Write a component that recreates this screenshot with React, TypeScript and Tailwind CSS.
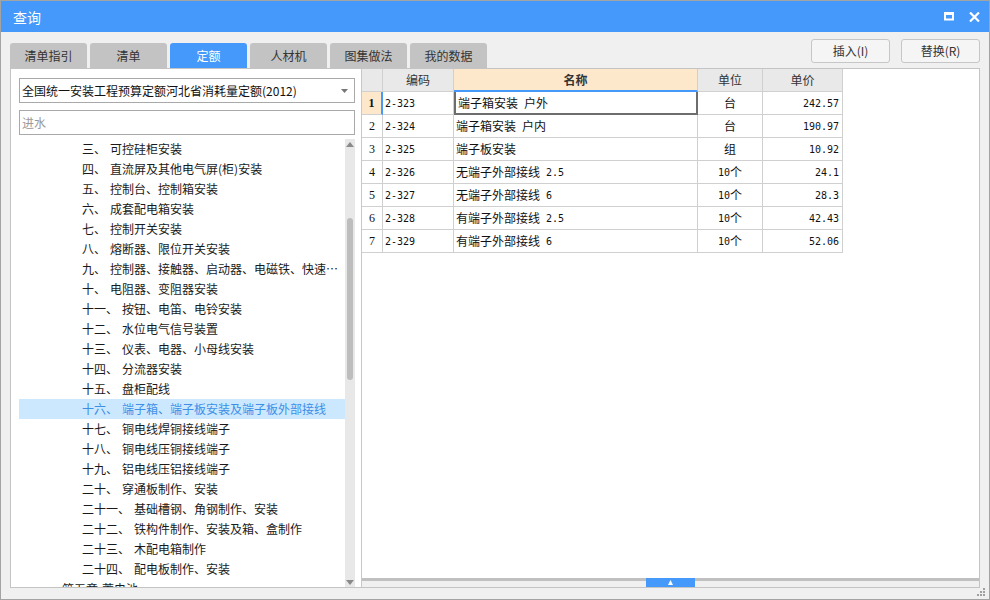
import React from "react";

const tabs = ["清单指引", "清单", "定额", "人材机", "图集做法", "我的数据"];

const tree: { num: string; text: string; level?: number; selected?: boolean }[] = [
  { num: "三、", text: "可控硅柜安装" },
  { num: "四、", text: "直流屏及其他电气屏(柜)安装" },
  { num: "五、", text: "控制台、控制箱安装" },
  { num: "六、", text: "成套配电箱安装" },
  { num: "七、", text: "控制开关安装" },
  { num: "八、", text: "熔断器、限位开关安装" },
  { num: "九、", text: "控制器、接触器、启动器、电磁铁、快速自动开关安装" },
  { num: "十、", text: "电阻器、变阻器安装" },
  { num: "十一、", text: "按钮、电笛、电铃安装" },
  { num: "十二、", text: "水位电气信号装置" },
  { num: "十三、", text: "仪表、电器、小母线安装" },
  { num: "十四、", text: "分流器安装" },
  { num: "十五、", text: "盘柜配线" },
  { num: "十六、", text: "端子箱、端子板安装及端子板外部接线", selected: true },
  { num: "十七、", text: "铜电线焊铜接线端子" },
  { num: "十八、", text: "铜电线压铜接线端子" },
  { num: "十九、", text: "铝电线压铝接线端子" },
  { num: "二十、", text: "穿通板制作、安装" },
  { num: "二十一、", text: "基础槽钢、角钢制作、安装" },
  { num: "二十二、", text: "铁构件制作、安装及箱、盒制作" },
  { num: "二十三、", text: "木配电箱制作" },
  { num: "二十四、", text: "配电板制作、安装" },
  { num: "第五章", text: "蓄电池", level: 0 },
];

const rows = [
  ["2-323", "端子箱安装 户外", "台", "242.57"],
  ["2-324", "端子箱安装 户内", "台", "190.97"],
  ["2-325", "端子板安装", "组", "10.92"],
  ["2-326", "无端子外部接线 2.5", "10个", "24.1"],
  ["2-327", "无端子外部接线 6", "10个", "28.3"],
  ["2-328", "有端子外部接线 2.5", "10个", "42.43"],
  ["2-329", "有端子外部接线 6", "10个", "52.06"],
];

const mono = "font-['DejaVu_Sans_Mono',monospace] text-[10px]";

// ascii runs in the grid use a narrow mono face, like the original's SimSun
function Mixed({ text }: { text: string }) {
  const parts = text.split(/([\x20-\x7e]+)/).filter(Boolean);
  return (
    <>
      {parts.map((p, i) =>
        /^[\x20-\x7e]+$/.test(p) ? (
          <span key={i} className={`${mono} whitespace-pre`}>
            {p}
          </span>
        ) : (
          <span key={i}>{p}</span>
        )
      )}
    </>
  );
}

function Triangle({ up }: { up?: boolean }) {
  return (
    <svg width="8" height="5" viewBox="0 0 8 5">
      <path d={up ? "M0 5 L4 0 L8 5 Z" : "M0 0 L8 0 L4 5 Z"} fill="#8a8a8a" />
    </svg>
  );
}

export default function App() {
  return (
    <div className="w-[990px] h-[600px] flex flex-col bg-[#f0f0f0] border border-[#a3a3a3] overflow-hidden text-[12px] text-[#222] font-['Microsoft_YaHei','Noto_Sans_CJK_SC',sans-serif]">
      {/* title bar */}
      <div className="h-[31px] shrink-0 bg-[#4499fb] flex items-center pl-3 pr-[9px] text-white">
        <span className="text-[14px] leading-none">查询</span>
        <div className="ml-auto flex items-center gap-[15px]">
          <svg width="10" height="9" viewBox="0 0 10 9">
            <rect x="1" y="1.5" width="8" height="6" fill="none" stroke="#fff" strokeWidth="2" />
            <rect x="0" y="0" width="10" height="3" fill="#fff" />
          </svg>
          <svg width="11" height="10" viewBox="0 0 11 10">
            <path d="M1 0.5 L10 9.5 M10 0.5 L1 9.5" stroke="#fff" strokeWidth="2.2" />
          </svg>
        </div>
      </div>

      <div className="flex-1 flex flex-col px-[9px]">
        {/* tabs + buttons */}
        <div className="h-[36px] shrink-0 flex items-end">
          <div className="flex gap-[3px]">
            {tabs.map((t) => (
              <div
                key={t}
                className={`w-[77px] h-[25px] rounded-t-[3px] flex items-center justify-center ${
                  t === "定额" ? "bg-[#4499fb] text-white" : "bg-[#c3c3c3] text-[#333]"
                }`}
              >
                {t}
              </div>
            ))}
          </div>
          <div className="ml-auto mb-[5px] flex gap-[11px]">
            {["插入(I)", "替换(R)"].map((b) => (
              <div
                key={b}
                className="w-[79px] h-[24px] rounded-[3px] border border-[#c6c6c6] bg-[#f5f5f5] flex items-center justify-center text-[#333]"
              >
                {b}
              </div>
            ))}
          </div>
        </div>

        {/* main panel */}
        <div className="h-[520px] shrink-0 flex bg-white border border-[#c4c4c4]">
          {/* left */}
          <div className="w-[350px] shrink-0 flex flex-col pl-[8px] pr-[6px] pt-[9px]">
            <div className="h-[25px] border border-[#a9a9a9] flex items-center pl-[2px] pr-[6px]">
              <span className="text-[#111]">全国统一安装工程预算定额河北省消耗量定额(2012)</span>
              <svg className="ml-auto" width="7" height="4" viewBox="0 0 7 4">
                <path d="M0 0 L7 0 L3.5 4 Z" fill="#777" />
              </svg>
            </div>
            <div className="h-[25px] mt-[7px] border border-[#a9a9a9] flex items-center pl-[2px] text-[#9a9a9a]">
              进水
            </div>
            <div className="mt-[4px] flex-1 flex overflow-hidden">
              <div className="flex-1 flex flex-col overflow-hidden">
                {tree.map((n) => (
                  <div
                    key={n.num + n.text}
                    className={`h-[20px] shrink-0 flex items-center pr-[5px] ${
                      n.level === 0 ? "pl-[43px]" : "pl-[63px]"
                    } ${n.selected ? "bg-[#cce8ff] text-[#3d8fe6]" : "text-[#1a1a1a]"}`}
                  >
                    <span className="truncate">
                      {n.num}
                      <span className="ml-1">{n.text}</span>
                    </span>
                  </div>
                ))}
              </div>
              <div className="w-[10px] shrink-0 bg-[#e8e8e8] flex flex-col items-center">
                <div className="h-[10px] flex items-center">
                  <Triangle up />
                </div>
                <div className="mt-[69px] w-[6px] h-[162px] rounded-full bg-[#bdbdbd]" />
                <div className="mt-auto h-[10px] flex items-center">
                  <Triangle />
                </div>
              </div>
            </div>
          </div>

          {/* right */}
          <div className="flex-1 flex flex-col border-l border-[#c8c8c8]">
            <div className="flex-1">
              <div className="flex h-[23px] text-[#333]">
                <div className="w-[21px] bg-[#e9e9e9] border-r border-b border-[#d0d0d0]" />
                <div className="w-[71px] bg-[#e9e9e9] border-r border-b border-[#d0d0d0] flex items-center justify-center">编码</div>
                <div className="w-[244px] bg-[#fde8cc] border-r border-[#d0d0d0] border-b-2 border-b-[#4499fb] flex items-center justify-center font-bold">名称</div>
                <div className="w-[65px] bg-[#e9e9e9] border-r border-b border-[#d0d0d0] flex items-center justify-center">单位</div>
                <div className="w-[80px] bg-[#e9e9e9] border-r border-b border-[#d0d0d0] flex items-center justify-center">单价</div>
              </div>
              {rows.map((r, i) => {
                const first = i === 0;
                return (
                  <div key={r[0]} className="flex h-[23px] text-[#111]">
                    <div
                      className={`w-[21px] border-b border-[#d0d0d0] flex items-center justify-center font-['Liberation_Serif',serif] text-[12px] ${
                        first ? "bg-[#fde8cc] font-bold border-r-2 border-r-[#4499fb]" : "border-r"
                      }`}
                    >
                      {i + 1}
                    </div>
                    <div className={`w-[71px] border-r border-b border-[#d0d0d0] flex items-center pl-[2px] ${mono}`}>
                      {r[0]}
                    </div>
                    <div
                      className={`w-[244px] flex items-center pl-[2px] ${
                        first ? "border-2 border-t-0 border-[#6d6d6d]" : "border-r border-b border-[#d0d0d0]"
                      }`}
                    >
                      <Mixed text={r[1]} />
                    </div>
                    <div className="w-[65px] border-r border-b border-[#d0d0d0] flex items-center justify-center">
                      <Mixed text={r[2]} />
                    </div>
                    <div className={`w-[80px] border-r border-b border-[#d0d0d0] flex items-center justify-end pr-[3px] ${mono}`}>
                      {r[3]}
                    </div>
                  </div>
                );
              })}
            </div>
            {/* horizontal scrollbar */}
            <div className="h-[9px] shrink-0 flex bg-[#f0f0f0]">
              <div className="w-[284px] h-[3px] bg-[#c0c0c0]" />
              <div className="w-[49px] h-[9px] bg-[#4499fb] flex items-center justify-center">
                <svg width="5" height="5" viewBox="0 0 5 5">
                  <path d="M0 5 L2.5 0 L5 5 Z" fill="#fff" />
                </svg>
              </div>
              <div className="flex-1 h-[3px] bg-[#c0c0c0]" />
            </div>
          </div>
        </div>

        <div className="flex-1 flex justify-end items-start -mr-[6px]">
          <svg width="9" height="8" viewBox="0 0 9 8">
            <rect x="6" y="0" width="2" height="2" fill="#a0a0a0" />
            <rect x="3" y="3" width="2" height="2" fill="#a0a0a0" />
            <rect x="6" y="3" width="2" height="2" fill="#a0a0a0" />
            <rect x="0" y="6" width="2" height="2" fill="#a0a0a0" />
            <rect x="3" y="6" width="2" height="2" fill="#a0a0a0" />
            <rect x="6" y="6" width="2" height="2" fill="#a0a0a0" />
          </svg>
        </div>
      </div>
    </div>
  );
}
